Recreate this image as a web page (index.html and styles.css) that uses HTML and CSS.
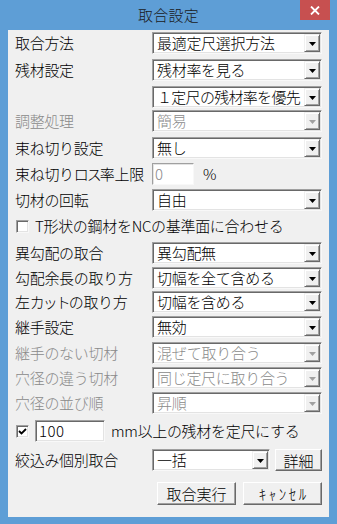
FILE: index.html
```html
<!DOCTYPE html>
<html lang="ja">
<head>
<meta charset="utf-8">
<title>取合設定</title>
<link rel="stylesheet" href="styles.css">
</head>
<body>
<div class="window">
  <div class="titlebar">
    <span class="title">取合設定</span>
    <div class="close"><svg width="10" height="9" viewBox="0 0 10 9"><path d="M1 0.5 L9 8.5 M9 0.5 L1 8.5" stroke="#fff" stroke-width="1.8" fill="none"/></svg></div>
  </div>
  <div class="client">
    <div class="row">
      <span class="label">取合方法</span>
      <div class="combo"><span class="val">最適定尺選択方法</span><span class="arrow"><svg width="7" height="4" viewBox="0 0 7 4"><path d="M0 0H7L3.5 4Z" fill="#000"/></svg></span></div>
    </div>
    <div class="row mt5">
      <span class="label">残材設定</span>
      <div class="combo"><span class="val">残材率を見る</span><span class="arrow"><svg width="7" height="4" viewBox="0 0 7 4"><path d="M0 0H7L3.5 4Z" fill="#000"/></svg></span></div>
    </div>
    <div class="row mt5">
      <span class="label"></span>
      <div class="combo"><span class="val val-tight">１定尺の残材率を優先</span><span class="arrow"><svg width="7" height="4" viewBox="0 0 7 4"><path d="M0 0H7L3.5 4Z" fill="#000"/></svg></span></div>
    </div>
    <div class="row mt2 disabled">
      <span class="label">調整処理</span>
      <div class="combo"><span class="val">簡易</span><span class="arrow"><svg width="7" height="4" viewBox="0 0 7 4"><path d="M0 0H7L3.5 4Z" fill="#a0a0a0"/></svg></span></div>
    </div>
    <div class="row mt5">
      <span class="label">束ね切り設定</span>
      <div class="combo"><span class="val">無し</span><span class="arrow"><svg width="7" height="4" viewBox="0 0 7 4"><path d="M0 0H7L3.5 4Z" fill="#000"/></svg></span></div>
    </div>
    <div class="row mt4">
      <span class="label">束ね切り<span class="narrow">ロス</span>率上限</span>
      <div class="edit edit-off">0</div>
      <span class="unit">%</span>
    </div>
    <div class="row mt4">
      <span class="label">切材の回転</span>
      <div class="combo"><span class="val">自由</span><span class="arrow"><svg width="7" height="4" viewBox="0 0 7 4"><path d="M0 0H7L3.5 4Z" fill="#000"/></svg></span></div>
    </div>
    <div class="row mt4 checkrow">
      <span class="check"></span>
      <span class="checktext">T形状の鋼材をNCの基準面に合わせる</span>
    </div>
    <div class="row mt5">
      <span class="label">異勾配の取合</span>
      <div class="combo"><span class="val">異勾配無</span><span class="arrow"><svg width="7" height="4" viewBox="0 0 7 4"><path d="M0 0H7L3.5 4Z" fill="#000"/></svg></span></div>
    </div>
    <div class="row mt3">
      <span class="label">勾配余長の取り方</span>
      <div class="combo"><span class="val">切幅を全て含める</span><span class="arrow"><svg width="7" height="4" viewBox="0 0 7 4"><path d="M0 0H7L3.5 4Z" fill="#000"/></svg></span></div>
    </div>
    <div class="row mt2">
      <span class="label">左<span class="narrow">カット</span>の取り方</span>
      <div class="combo"><span class="val">切幅を含める</span><span class="arrow"><svg width="7" height="4" viewBox="0 0 7 4"><path d="M0 0H7L3.5 4Z" fill="#000"/></svg></span></div>
    </div>
    <div class="row mt3">
      <span class="label">継手設定</span>
      <div class="combo"><span class="val">無効</span><span class="arrow"><svg width="7" height="4" viewBox="0 0 7 4"><path d="M0 0H7L3.5 4Z" fill="#000"/></svg></span></div>
    </div>
    <div class="row mt4 disabled">
      <span class="label">継手のない切材</span>
      <div class="combo"><span class="val">混ぜて取り合う</span><span class="arrow"><svg width="7" height="4" viewBox="0 0 7 4"><path d="M0 0H7L3.5 4Z" fill="#a0a0a0"/></svg></span></div>
    </div>
    <div class="row mt3 disabled">
      <span class="label">穴径の違う切材</span>
      <div class="combo"><span class="val">同じ定尺に取り合う</span><span class="arrow"><svg width="7" height="4" viewBox="0 0 7 4"><path d="M0 0H7L3.5 4Z" fill="#a0a0a0"/></svg></span></div>
    </div>
    <div class="row mt3 disabled">
      <span class="label">穴径の並び順</span>
      <div class="combo"><span class="val">昇順</span><span class="arrow"><svg width="7" height="4" viewBox="0 0 7 4"><path d="M0 0H7L3.5 4Z" fill="#a0a0a0"/></svg></span></div>
    </div>
    <div class="row mt6 checkrow">
      <span class="check"><svg width="9" height="9" viewBox="0 0 9 9"><path d="M1 4 L3.5 6.5 L8 2" stroke="#000" stroke-width="1.8" fill="none"/></svg></span>
      <div class="edit edit-num">100</div>
      <span class="checktext">mm以上の残材を定尺にする</span>
    </div>
    <div class="row mt7">
      <span class="label">絞込み個別取合</span>
      <div class="combo combo-short"><span class="val">一括</span><span class="arrow"><svg width="7" height="4" viewBox="0 0 7 4"><path d="M0 0H7L3.5 4Z" fill="#000"/></svg></span></div>
      <button class="btn btn-detail">詳細</button>
    </div>
    <div class="row mt11 actions">
      <button class="btn btn-main">取合実行</button>
      <button class="btn btn-main"><span class="halfkana">ｷｬﾝｾﾙ</span></button>
    </div>
  </div>
</div>
</body>
</html>
```

FILE: styles.css
```css
html, body {
  margin: 0;
  padding: 0;
  width: 337px;
  height: 524px;
  overflow: hidden;
}

body {
  font-family: "Noto Sans CJK JP", "Noto Sans", sans-serif;
  font-size: 15px;
  font-weight: 300;
  color: #000;
}

.window {
  width: 337px;
  height: 524px;
  background: #5e9ed6;
  display: flex;
  flex-direction: column;
}

.titlebar {
  height: 30px;
  line-height: 30px;
  text-align: center;
  position: relative;
  flex: none;
}

.title {
  font-size: 15px;
  color: #1a1a1a;
  letter-spacing: 0.2px;
}

.close {
  position: absolute;
  top: 0;
  right: 7px;
  width: 30px;
  height: 20px;
  background: #c75050;
  display: flex;
  align-items: center;
  justify-content: center;
}

.close svg {
  display: block;
}

.client {
  flex: 1;
  margin: 0 8px 7px 8px;
  background: #f0f0f0;
  padding: 2px 7px 0 7px;
  display: flex;
  flex-direction: column;
}

.row {
  display: flex;
  align-items: center;
  height: 22px;
  line-height: 20px;
  letter-spacing: -0.3px;
  flex: none;
}

.mt2 { margin-top: 2px; }
.mt3 { margin-top: 3px; }
.mt4 { margin-top: 4px; }
.mt5 { margin-top: 5px; }
.mt6 { margin-top: 6px; }
.mt7 { margin-top: 7px; }
.mt11 { margin-top: 11px; }

.label {
  width: 137px;
  flex: none;
  white-space: nowrap;
}

.narrow {
  letter-spacing: -2px;
}

.disabled .label,
.disabled .val {
  color: #8a8a8a;
}

.combo {
  width: 170px;
  height: 22px;
  box-sizing: border-box;
  background: #fff;
  border: 1px solid;
  border-color: #a0a0a0 #f8f8f8 #f8f8f8 #a0a0a0;
  box-shadow: inset 1px 1px 0 #696969, inset -1px -1px 0 #e3e3e3;
  padding: 1px;
  display: flex;
  align-items: center;
  flex: none;
}

.combo-short {
  width: 118px;
}

.val {
  flex: 1;
  min-width: 0;
  padding-left: 3px;
  white-space: nowrap;
  line-height: 20px;
}

.val-tight {
  letter-spacing: -0.7px;
}

.arrow {
  width: 16px;
  height: 18px;
  flex: none;
  box-sizing: border-box;
  background: #f0f0f0;
  border: 1px solid;
  border-color: #f0f0f0 #696969 #696969 #f0f0f0;
  box-shadow: inset 1px 1px 0 #fff, inset -1px -1px 0 #a0a0a0;
  display: flex;
  align-items: center;
  justify-content: center;
  padding-top: 1px;
}

.arrow svg {
  display: block;
}

.edit {
  height: 22px;
  box-sizing: border-box;
  background: #fff;
  border: 1px solid;
  border-color: #a0a0a0 #f8f8f8 #f8f8f8 #a0a0a0;
  box-shadow: inset 1px 1px 0 #696969, inset -1px -1px 0 #e3e3e3;
  padding: 0 3px;
  line-height: 20px;
  flex: none;
}

.edit-off {
  width: 42px;
  color: #8a8a8a;
  box-shadow: inset 1px 1px 0 #e3e3e3;
  padding-left: 2px;
}

.edit-num {
  width: 70px;
  margin-left: 6px;
  letter-spacing: 0.5px;
}

.unit {
  margin-left: 9px;
}

.checkrow {
  padding-left: 1px;
}

.check {
  width: 13px;
  height: 13px;
  box-sizing: border-box;
  background: #fff;
  border: 1px solid;
  border-color: #a0a0a0 #f8f8f8 #f8f8f8 #a0a0a0;
  box-shadow: inset 1px 1px 0 #696969, inset -1px -1px 0 #e3e3e3;
  display: flex;
  align-items: center;
  justify-content: center;
  flex: none;
}

.check svg {
  display: block;
}

.checktext {
  margin-left: 6px;
  white-space: nowrap;
}

.btn {
  font-family: inherit;
  font-size: 15px;
  font-weight: 300;
  letter-spacing: 0;
  color: #000;
  background: #f0f0f0;
  border: 1px solid;
  border-color: #fff #696969 #696969 #fff;
  box-shadow: inset -1px -1px 0 #a0a0a0, inset 1px 1px 0 #f0f0f0;
  padding: 0;
  margin: 0;
  box-sizing: border-box;
  line-height: 19px;
  flex: none;
}

.btn-detail {
  width: 47px;
  height: 22px;
  margin-left: 5px;
}

.actions {
  height: 23px;
  justify-content: flex-end;
  gap: 7px;
}

.btn-main {
  width: 79px;
  height: 23px;
}

.halfkana {
  letter-spacing: 2.5px;
  margin-right: -2.5px;
}
```
